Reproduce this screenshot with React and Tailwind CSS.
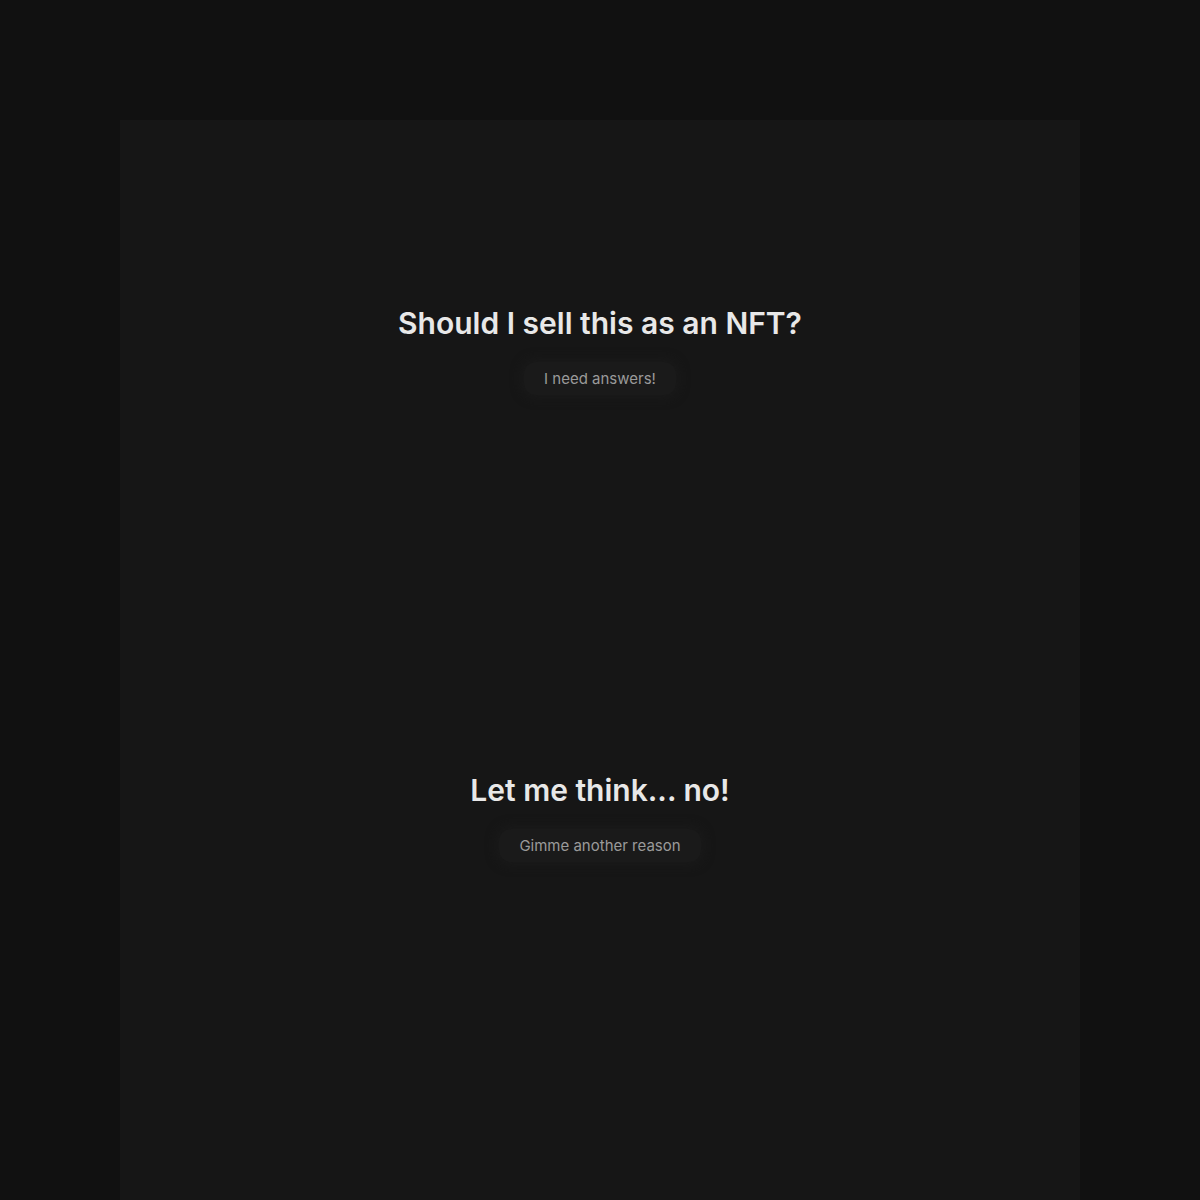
import React from 'react';

const Prompt = ({ title, action }) => (
  <div className="h-[467px] pb-[7px] flex flex-col items-center justify-center">
    <h1 className="text-[30px] leading-9 font-semibold text-[#e8e8e8]">{title}</h1>
    <button className="mt-[21px] px-5 py-[6px] rounded-xl bg-[#1a1a1a] text-[15px] leading-[21px] text-[#9a9a9a] shadow-[0_0_10px_4px_rgba(26,26,26,0.8)]">
      {action}
    </button>
  </div>
);

export default function App() {
  return (
    <div
      className="min-h-[1200px] bg-[#111111] pt-[120px] px-[120px]"
      style={{ fontFamily: 'Inter, "Noto Sans", sans-serif' }}
    >
      <div className="bg-[#161616] min-h-[1080px]">
        <Prompt title="Should I sell this as an NFT?" action="I need answers!" />
        <Prompt title="Let me think... no!" action="Gimme another reason" />
      </div>
    </div>
  );
}
